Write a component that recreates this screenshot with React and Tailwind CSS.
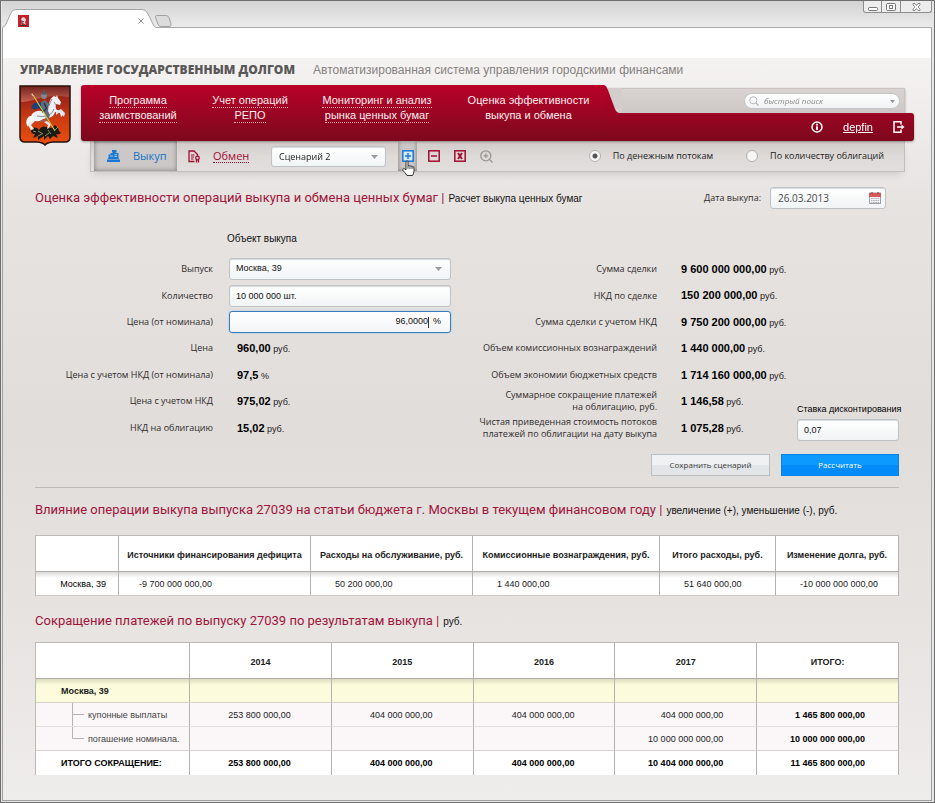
import React from "react";

const FIELD =
  "rounded-[3px] border border-[#bfc3c8] bg-linear-to-b from-white to-[#f1f4f5] shadow-[inset_0_1px_1px_#d5dadd]";

function Emblem({ className }) {
  return (
    <svg viewBox="0 0 52 62" className={className} aria-label="Герб Москвы">
      <defs>
        <linearGradient id="shield" x1="0" y1="0" x2="0" y2="1">
          <stop offset="0" stopColor="#8c1c12" />
          <stop offset="0.3" stopColor="#a82a18" />
          <stop offset="0.55" stopColor="#cc3c10" />
          <stop offset="1" stopColor="#ea5010" />
        </linearGradient>
        <linearGradient id="gloss" x1="0" y1="0" x2="0" y2="1">
          <stop offset="0" stopColor="#6d2a26" />
          <stop offset="1" stopColor="#d67a68" />
        </linearGradient>
      </defs>
      <path d="M1 1H51V52Q51 57 46 57H34Q28 57.500 26 60Q24 57.500 18 57H6Q1 57 1 52Z" fill="url(#shield)" stroke="#26100c" strokeWidth="1.500" />
      <path d="M2 2H50V12Q32 9 18 14Q8 17 2 17Z" fill="url(#gloss)" opacity="0.7" />
      {/* dragon */}
      <path d="M12 46q2-5 6-3l2 2q3-5 7-3l6 1l3-3q3 2 4 6l2 2q-2 2-5 1l2 4l-5-2l-3 3l-2-3l-4 4v-4l-6 4v-4l-5 2l2-4q-4 0-4-3z" fill="#191b14" />
      <path d="M19 46l5 3M29 45l3 4M36 45l3-3M19 51l4-2M26 51l4-3M14 46l3 1" stroke="#a39a74" strokeWidth="0.900" fill="none" />
      {/* horse */}
      <path d="M35 11l2 1l1-2l1 3l3 4l-1 3l-4-1q-1 4 1 6l5 1l1 4l-2 2l-1-4l-5-1q-1 5-7 6l-5 1q-3 3-8 2l-4 4l3 4l-3 1l-3-5l3-5q-1-4 2-7q4-3 9-2q5-2 7-7q1-6 5-8z" fill="#eef1f5" />
      <path d="M37 27l5-3l4 4l-1 4l-2-3l-2-2l-4 3zM28 36l4 3l-2 4l-2 1l1-4l-4-3z" fill="#dfe4ea" />
      <path d="M15 32q-5-3-7 2q-2 4 1 8q1-4 3-6q2-2 4-1z" fill="#f5f6f8" />
      <path d="M18 31q5 1 10 0M30 30q4-2 5-6M21 36q4 1 8-2M35 17l2 3M33 14q-2 3-3 7" stroke="#7a828e" strokeWidth="0.900" fill="none" />
      {/* rider */}
      <path d="M19 17q-5 0-7 6q2 0 3 2q3-2 8-2l4-4z" fill="#1f3f78" />
      <path d="M22 17l4-2l4 4l-1 7l2 4l-2 5h-2l-1-6l-4-4z" fill="#5f6b78" />
      <path d="M20 22l4 5l3-3M25 18l3 6" stroke="#1c2c48" strokeWidth="1.200" fill="none" />
      <circle cx="25" cy="11" r="3" fill="#7f8892" />
      <path d="M22.500 9.500l2.500-5l3 5z" fill="#505a66" />
      <path d="M14 10L36 46" stroke="#d8cb3a" strokeWidth="1.100" />
      <path d="M13 8l1.500 3l-2-1z" fill="#eee" />
    </svg>
  );
}

const Arrow = ({ className }) => (
  <svg viewBox="0 0 7 4" className={"pointer-events-none h-1 w-[7px] " + className} aria-hidden="true">
    <path d="M0 0H7L3.500 4Z" fill="#9a9ea3" />
  </svg>
);

function TitleBar() {
  return (
    <div className="flex h-[27px] items-end justify-between bg-linear-to-b from-[#d3d3d3] to-[#ededed] shadow-[inset_0_-1px_0_#a9a9a9]">
      <div className="flex items-end">
        <div className="relative flex h-[19px] w-[154px] items-center justify-between pt-1 pr-[11px] pl-4">
          <svg viewBox="0 0 154 19" className="absolute inset-0 h-[19px] w-[154px]" aria-hidden="true">
            <path d="M0 18.500Q3 18 4 15L9 4Q10 .5 14 .5H140Q144 .5 145.500 4L151 15Q152 18 154 18.500V19H0Z" fill="#fff" />
            <path d="M0 18.500Q3 18 4 15L9 4Q10 .5 14 .5H140Q144 .5 145.500 4L151 15Q152 18 154 18.500" fill="none" stroke="#a5a5a5" />
          </svg>
          <svg viewBox="0 0 11 12" className="relative h-3 w-[11px]" aria-hidden="true">
            <rect width="11" height="12" fill="#c51f2c" />
            <path d="M3 10l1-4l-1-2l2-2l2 1l1 2l-1 2l1 3l-3-2z" fill="#ddd" />
            <path d="M2 10.500h7M4 6l2 1M3 8h2" stroke="#333" />
          </svg>
          <button aria-label="Закрыть вкладку" className="relative flex size-2 items-center justify-center">
            <svg viewBox="0 0 6 6" className="size-[6px]"><path d="M.5 .5L5.500 5.500M5.500 .5L.5 5.500" stroke="#8f8f8f" /></svg>
          </button>
        </div>
        <button aria-label="Новая вкладка" className="mb-px -ml-px">
          <svg viewBox="0 0 18 13" className="h-3 w-[17px]"><path d="M1.500 .5H12Q14 .5 15 3L17 9Q18 12.500 15 12.500H6Q4 12.500 3 10L.5 3Q0 .5 1.500 .5Z" fill="#dcdcdc" stroke="#9a9a9a" /></svg>
        </button>
      </div>
      <div className="flex h-3 divide-x divide-[#8d8d8d] self-start rounded-b-[3px] border border-t-0 border-[#8d8d8d] bg-[#ededed]">
        <button aria-label="Свернуть" className="flex w-[18px] items-center justify-center pt-1">
          <svg viewBox="0 0 10 4" className="h-1 w-[10px]"><rect x=".5" y=".5" width="9" height="3" rx="1" fill="#fff" stroke="#777" /></svg>
        </button>
        <button aria-label="Развернуть" className="flex w-[19px] items-center justify-center">
          <svg viewBox="0 0 10 8" className="h-2 w-[10px]"><rect x=".5" y=".5" width="9" height="7" rx="1" fill="#fff" stroke="#777" /><rect x="3.500" y="2.500" width="3" height="3" fill="none" stroke="#777" /></svg>
        </button>
        <button aria-label="Закрыть" className="flex w-[30px] items-center justify-center">
          <svg viewBox="0 0 9 8" className="h-2 w-[9px]"><path d="M1 .5H3L4.500 2.500L6 .5H8V2L6 4L8 6V7.500H6L4.500 5.500L3 7.500H1V6L3 4L1 2Z" fill="#fff" stroke="#777" strokeWidth=".8" /></svg>
        </button>
      </div>
    </div>
  );
}

function NavLink({ lines, className, active }) {
  return (
    <a href="#" className={"flex flex-col items-center text-[11px] leading-[15px] text-[#fbeef0] " + className}>
      {lines.map((l) => (
        <span key={l} className={active ? "border-b border-transparent leading-[14px]" : "border-b border-dotted border-[#e5a5b0] leading-[14px]"}>
          {l}
        </span>
      ))}
    </a>
  );
}

function Header() {
  return (
    <header className="px-4">
      <div className="flex h-[27px] items-center gap-[18px] pb-[3px] pl-px">
        <h1 className="font-['Open_Sans',sans-serif] text-[12px] font-extrabold whitespace-nowrap text-[#5a5857]">УПРАВЛЕНИЕ ГОСУДАРСТВЕННЫМ ДОЛГОМ</h1>
        <p className="text-[12px] whitespace-nowrap text-[#858281]">Автоматизированная система управления городскими финансами</p>
      </div>
      <div className="flex gap-[10px]">
        <Emblem className="h-[62px] w-[52px] shrink-0" />
        <div className="mr-px min-w-0 flex-1">
          <div className="flex h-14 drop-shadow-[0_1px_1px_#00000055]">
            <nav className="flex w-[523px] shrink-0 rounded-l-[3px] bg-linear-to-b from-[#ba0029] to-[#7d081d] pt-2 whitespace-nowrap">
              <NavLink className="w-[114px]" lines={["Программа", "заимствований"]} />
              <NavLink className="w-[110px]" lines={["Учет операций", "РЕПО"]} />
              <NavLink className="w-[144px]" lines={["Мониторинг и анализ", "рынка ценных бумаг"]} />
              <NavLink active className="w-[155px] pl-1" lines={["Оценка эффективности", "выкупа и обмена"]} />
            </nav>
            <div className="flex min-w-0 flex-1 flex-col">
              <div className="flex h-7">
                <svg viewBox="0 0 18 28" className="h-7 w-[18px] shrink-0" aria-hidden="true">
                  <defs>
                    <linearGradient id="slant" x1="0" y1="0" x2="0" y2="1">
                      <stop offset="0" stopColor="#ba0029" />
                      <stop offset="1" stopColor="#9c0423" />
                    </linearGradient>
                  </defs>
                  <path d="M4 3H18V28H10Z" fill="#d3cdcb" />
                  <path d="M-1 0Q2 0 3.500 4L11 24Q12.500 28 16 28H-1Z" fill="url(#slant)" />
                </svg>
                <div className="mt-[3px] mr-[9px] flex flex-1 items-center justify-end border-t border-r border-[#c9c3c1] bg-linear-to-b from-[#d9d4d2] to-[#cdc6c4] pr-1">
                  <label className="flex h-4 w-[156px] items-center gap-[5px] rounded-full border border-[#c4c6c8] bg-linear-to-b from-white to-[#f1f3f4] pr-1 pl-1">
                    <svg viewBox="0 0 10 10" className="size-[10px] shrink-0" aria-hidden="true">
                      <circle cx="4.300" cy="4.300" r="3.600" fill="none" stroke="#b5b9bc" />
                      <path d="M7 7L9.600 9.600" stroke="#b5b9bc" strokeWidth="1.300" />
                    </svg>
                    <input type="search" aria-label="быстрый поиск" placeholder="быстрый поиск" className="min-w-0 flex-1 bg-transparent font-['Open_Sans',sans-serif] text-[8px] italic outline-none placeholder:text-[#8b8988]" />
                    <svg viewBox="0 0 5 3" className="h-[3px] w-[5px] shrink-0" aria-hidden="true"><path d="M0 0H5L2.500 3Z" fill="#8f9499" /></svg>
                  </label>
                </div>
              </div>
              <div className="flex h-7 items-center justify-end gap-5 rounded-r-[3px] bg-linear-to-b from-[#9c0423] to-[#7d081d] pr-[9px]">
                <button aria-label="Информация">
                  <svg viewBox="0 0 12 12" className="size-3"><circle cx="6" cy="6" r="5" fill="none" stroke="#fff" strokeWidth="1.500" /><path d="M6 5.300V9" stroke="#fff" strokeWidth="1.800" /><path d="M6 2.800V4.400" stroke="#fff" strokeWidth="1.800" /></svg>
                </button>
                <a href="#" className="text-[11px] text-white underline">depfin</a>
                <button aria-label="Выход">
                  <svg viewBox="0 0 12 12" className="size-3" fill="none" stroke="#fff" strokeWidth="1.500"><path d="M8 3.500V.8H1V11.200H8V8.500" /><path d="M4 6H10" /><path d="M8.500 3.500L11.500 6L8.500 8.500Z" fill="#fff" stroke="none" /></svg>
                </button>
              </div>
            </div>
          </div>
          <Toolbar />
        </div>
      </div>
    </header>
  );
}

function Toolbar() {
  return (
    <div className="mx-[9px] flex h-[31px] items-stretch border-x border-b border-[#c3bebd] bg-linear-to-b from-[#d0cbc9] via-[#dedad8] to-[#e2dedd] pl-[3px] font-['Open_Sans',sans-serif] shadow-[0_5px_8px_-3px_#00000022]">
      <button className="flex w-[83px] items-center gap-[13px] bg-[#cbc8c7] pl-[13px] text-[11px] text-[#1673c8] shadow-[inset_0_0_5px_#00000066]">
        <svg viewBox="0 0 13 12" className="h-3 w-[13px]" fill="#1878d6" aria-hidden="true">
          <path d="M5 0H9.500V2.500H8.500V3H11.500V8H1.500V4.500H3.500V3H6V2.500H5Z" />
          <path d="M0 9.500H13V12H0ZM1 8H12V9H1Z" />
          <path d="M3 6H6M7.500 4.700H10M7.500 6.500H10" stroke="#d7e6f4" strokeWidth=".8" />
        </svg>
        Выкуп
      </button>
      <button className="flex w-[84px] items-center gap-3 pl-[11px] text-[11px] text-[#a30b30]">
        <svg viewBox="0 0 13 13" className="size-[13px]" fill="none" stroke="#a30b30" strokeWidth="1.300" aria-hidden="true">
          <path d="M6.500 11.500H1V1H6L9.500 4.500V6" /><path d="M3 5H6.500M3 7H6M3 9H5.500" strokeWidth="1" />
          <circle cx="9.500" cy="8" r="1.800" /><path d="M8.500 10V12.500M10.500 10V12.500" />
        </svg>
        <span className="border-b border-dotted border-[#a30b30] leading-[13px]">Обмен</span>
      </button>
      <div className="relative ml-[10px] flex items-center pt-px">
        <select aria-label="Сценарий" className={"h-[21px] w-[115px] appearance-none pl-[7px] text-[9px] text-[#222] " + FIELD}>
          <option>Сценарий 2</option>
        </select>
        <Arrow className="absolute right-2" />
      </div>
      <div className="relative ml-3 flex">
        <button aria-label="Добавить" className="flex w-[19px] items-center justify-center bg-[#cbc7c6] shadow-[inset_0_0_4px_#00000066]">
          <svg viewBox="0 0 12 12" className="size-3" fill="none" stroke="#1878d6" strokeWidth="1.500"><rect x=".8" y=".8" width="10.400" height="10.400" fill="#dbe8f4" /><path d="M6 3V9M3 6H9" /></svg>
        </button>
        <svg viewBox="0 0 13 16" className="absolute top-[19px] left-[4px] z-10 h-4 w-[13px]" aria-hidden="true">
          <path d="M4 9V2Q4 .6 5 .6T6 2V6Q7 5 8 6.200Q9.200 5.400 10 6.800Q12 6 12 8V11Q12 13 10.500 15.500H5Q3 12.500 1 10.500Q.4 9 1.500 8.600Q2.800 8.500 4 10Z" fill="#fff" stroke="#222" strokeWidth=".9" />
          <path d="M6 6V9M8 6.500V9M10 7V9" stroke="#222" strokeWidth=".8" />
        </svg>
      </div>
      <div className="ml-[11px] flex items-center gap-[14px]">
        <button aria-label="Убрать">
          <svg viewBox="0 0 12 12" className="size-3" fill="none" stroke="#a30b30" strokeWidth="1.500"><rect x=".8" y=".8" width="10.400" height="10.400" /><path d="M3 6H9" /></svg>
        </button>
        <button aria-label="Удалить">
          <svg viewBox="0 0 12 12" className="size-3" fill="none" stroke="#a30b30" strokeWidth="1.500"><rect x=".8" y=".8" width="10.400" height="10.400" /><path d="M4 3L8 9M8 3L4 9" strokeWidth="1.900" /></svg>
        </button>
        <button aria-label="Увеличить">
          <svg viewBox="0 0 13 13" className="size-[13px]" fill="none" stroke="#999593" strokeWidth="1.300"><circle cx="5.800" cy="5.800" r="5" /><path d="M5.800 3.600V8M3.600 5.800H8M9.500 9.500L12.500 12.500" /></svg>
        </button>
      </div>
      <fieldset className="ml-auto flex items-center pr-[20px]">
        <Radio id="flows" label="По денежным потокам" defaultChecked />
        <span className="w-[33px]" />
        <Radio id="bonds" label="По количеству облигаций" />
      </fieldset>
    </div>
  );
}

const Radio = ({ id, label, defaultChecked }) => (
  <div className="flex items-center gap-3">
    <input
      id={id}
      type="radio"
      name="mode"
      defaultChecked={defaultChecked}
      className="size-3 appearance-none rounded-full border border-[#b3b1b0] bg-[#f6f6f6] checked:bg-[radial-gradient(circle,#555_0_2px,#f6f6f6_3px)]"
    />
    <label htmlFor={id} className="text-[9px] whitespace-nowrap text-[#222]">{label}</label>
  </div>
);

const SectionTitle = ({ title, note }) => (
  <h2 className="flex items-baseline gap-1 whitespace-nowrap">
    <span className="font-[Roboto,sans-serif] text-[13px] leading-5 text-[#a0143a]">{title} |</span>
    <small className="text-[10px] text-[#111]">{note}</small>
  </h2>
);

const LABEL = "text-right font-['Open_Sans',sans-serif] text-[9px] leading-3 text-[#2f2c2b]";

const Value = ({ value, unit }) => (
  <span className="text-[9px] whitespace-nowrap text-[#1c1a19]">
    <b className="text-[11px] text-black">{value}</b> {unit}
  </span>
);

const PRICES = [
  ["Цена", "960,00", "руб."],
  ["Цена с учетом НКД (от номинала)", "97,5", "%"],
  ["Цена с учетом НКД", "975,02", "руб."],
  ["НКД на облигацию", "15,02", "руб."],
];

const TOTALS = [
  [["Сумма сделки"], "9 600 000 000,00"],
  [["НКД по сделке"], "150 200 000,00"],
  [["Сумма сделки с учетом НКД"], "9 750 200 000,00"],
  [["Объем комиссионных вознаграждений"], "1 440 000,00"],
  [["Объем экономии бюджетных средств"], "1 714 160 000,00"],
  [["Суммарное сокращение платежей", "на облигацию, руб."], "1 146,58"],
  [["Чистая приведенная стоимость потоков", "платежей по облигации на дату выкупа"], "1 075,28"],
];

function Row({ label, htmlFor, children }) {
  return (
    <div className="flex items-center gap-4">
      <label htmlFor={htmlFor} className={"w-[178px] shrink-0 " + LABEL}>{label}</label>
      {children}
    </div>
  );
}

function Form() {
  return (
    <section>
      <h3 className="pl-48 text-[10px] leading-4 text-[#111]">Объект выкупа</h3>
      <div className="mt-[9px] flex h-[185px]">
        <div className="grid w-[416px] shrink-0 grid-rows-7">
          <Row label="Выпуск" htmlFor="issue">
            <div className="relative flex flex-1 items-center">
              <select id="issue" className={"h-[22px] w-full appearance-none pl-[6px] text-[9px] text-[#111] " + FIELD}>
                <option>Москва, 39</option>
              </select>
              <Arrow className="absolute right-[9px]" />
            </div>
          </Row>
          <Row label="Количество" htmlFor="amount">
            <input id="amount" defaultValue="10 000 000 шт." className={"h-[22px] min-w-0 flex-1 pl-[6px] text-[9px] text-[#111] " + FIELD} />
          </Row>
          <Row label="Цена (от номинала)" htmlFor="price">
            <div className="flex h-[22px] min-w-0 flex-1 items-center rounded-[3px] border border-[#3a7db8] bg-linear-to-b from-white to-[#f3f5f6] pr-[9px] text-[9px] text-[#111] shadow-[0_0_2px_#8fc0e8]">
              <input id="price" defaultValue="96,0000" className="min-w-0 flex-1 bg-transparent text-right outline-none" />
              <span className="mr-1 h-[11px] w-px bg-[#333]" />
              <span>%</span>
            </div>
          </Row>
          {PRICES.map(([label, value, unit]) => (
            <Row key={label} label={label}>
              <span className="flex pl-2"><Value value={value} unit={unit} /></span>
            </Row>
          ))}
        </div>
        <div className="grid flex-1 grid-rows-7">
          {TOTALS.map(([lines, value]) => (
            <div key={value} className="flex items-center gap-6">
              <span className={"w-[206px] shrink-0 whitespace-nowrap " + LABEL}>
                {lines.map((l) => <span key={l} className="block">{l}</span>)}
              </span>
              <Value value={value} unit="руб." />
            </div>
          ))}
        </div>
        <div className="flex w-[102px] shrink-0 flex-col justify-end gap-1">
          <label htmlFor="rate" className="text-[9px] leading-3 whitespace-nowrap text-black">Ставка дисконтирования</label>
          <input id="rate" defaultValue="0,07" className={"h-[22px] w-full pl-[6px] text-[9px] text-[#111] " + FIELD} />
        </div>
      </div>
      <div className="mt-[13px] flex justify-end gap-[11px] font-['Open_Sans',sans-serif] text-[8px]">
        <button className="h-[22px] w-[119px] border border-[#b9bec2] bg-linear-to-b from-[#eff1f2] from-50% to-[#e3e6e8] to-50% text-[#3a3d40]">Сохранить сценарий</button>
        <button className="h-[22px] w-[118px] border border-[#0a83e6] bg-linear-to-b from-[#0c9aff] from-50% to-[#038bfa] to-50% text-white">Рассчитать</button>
      </div>
    </section>
  );
}

const TABLE = "w-full table-fixed border-separate border-spacing-0 border-t border-l border-[#bdb9b8] bg-white text-[9px] leading-3 text-[#1c1c1c]";
const CELL = "border-r border-[#b5b1b0] ";
const HEAD = CELL + "h-9 border-b border-b-[#b1adac] pt-[3px] text-center font-bold whitespace-nowrap";

const BUDGET = [
  ["-9 700 000 000,00", "pl-5"],
  ["50 200 000,00", "pl-6"],
  ["1 440 000,00", "pl-6"],
  ["51 640 000,00", "pl-6"],
  ["-10 000 000 000,00", "pl-6"],
];

function BudgetTable() {
  return (
    <table className={TABLE}>
      <colgroup>
        <col className="w-[83px]" /><col className="w-[192px]" /><col className="w-[162px]" /><col className="w-[187px]" /><col className="w-[116px]" /><col />
      </colgroup>
      <thead>
        <tr>
          {["", "Источники финансирования дефицита", "Расходы на обслуживание, руб.", "Комиссионные вознаграждения, руб.", "Итого расходы, руб.", "Изменение долга, руб."].map((h) => (
            <th key={h} scope="col" className={HEAD}>{h}</th>
          ))}
        </tr>
      </thead>
      <tbody>
        <tr className="bg-linear-to-b from-[#dcdad9] to-white to-25%">
          <th scope="row" className={CELL + "h-6 border-b border-b-[#cfcbca] pr-3 text-right font-normal text-black"}>Москва, 39</th>
          {BUDGET.map(([v, pad]) => (
            <td key={v} className={CELL + "border-b border-b-[#cfcbca] text-left whitespace-nowrap " + pad}>{v}</td>
          ))}
        </tr>
      </tbody>
    </table>
  );
}

const NUM = CELL + "pr-10 text-right whitespace-nowrap";
const NUM_WIDE = CELL + "pr-[33px] text-right whitespace-nowrap";

function Cells({ values, className, boldLast }) {
  return values.map((v, i) => (
    <td key={i} className={(i > 2 ? NUM_WIDE : NUM) + " " + className + (boldLast && i === 4 ? " font-bold text-black" : "")}>{v}</td>
  ));
}

function ReductionTable() {
  const line = "border-b border-b-[#e4dfdf]";
  return (
    <table className={TABLE}>
      <colgroup>
        <col className="w-[154px]" /><col /><col /><col /><col /><col />
      </colgroup>
      <thead>
        <tr>
          {["", "2014", "2015", "2016", "2017", "ИТОГО:"].map((h) => (
            <th key={h} scope="col" className={HEAD}>{h}</th>
          ))}
        </tr>
      </thead>
      <tbody>
        <tr className="h-6 bg-linear-to-b from-[#dcdcbf] to-[#fcfbdb] to-25%">
          <th scope="row" className={CELL + "border-b border-b-[#d5d2c8] pl-[25px] text-left font-bold"}>Москва, 39</th>
          <Cells values={["", "", "", "", ""]} className="border-b border-b-[#d5d2c8]" />
        </tr>
        <tr className="h-6 bg-[#fbf7f9]">
          <th scope="row" className={CELL + line + " text-left font-normal text-[#444]"}>
            <span className="flex h-[23px] items-stretch gap-1 pl-9">
              <svg viewBox="0 0 12 23" className="h-[23px] w-3" aria-hidden="true"><path d="M.5 0V23M.5 11.500H12" stroke="#b7b3b3" fill="none" /></svg>
              <span className="self-center">купонные выплаты</span>
            </span>
          </th>
          <Cells values={["253 800 000,00", "404 000 000,00", "404 000 000,00", "404 000 000,00", "1 465 800 000,00"]} className={line} boldLast />
        </tr>
        <tr className="h-6 bg-[#fbf7f9]">
          <th scope="row" className={CELL + "border-b border-b-[#d8d3d3] text-left font-normal text-[#444]"}>
            <span className="flex h-[23px] items-stretch gap-1 pl-9 whitespace-nowrap">
              <svg viewBox="0 0 12 23" className="h-[23px] w-3" aria-hidden="true"><path d="M.5 0V11.500H12" stroke="#b7b3b3" fill="none" /></svg>
              <span className="self-center">погашение номинала.</span>
            </span>
          </th>
          <Cells values={["", "", "", "10 000 000 000,00", "10 000 000 000,00"]} className="border-b border-b-[#d8d3d3]" boldLast />
        </tr>
        <tr className="h-6 font-bold text-black">
          <th scope="row" className={CELL + "pl-[25px] text-left whitespace-nowrap"}>ИТОГО СОКРАЩЕНИЕ:</th>
          <Cells values={["253 800 000,00", "404 000 000,00", "404 000 000,00", "10 404 000 000,00", "11 465 800 000,00"]} className="" />
        </tr>
      </tbody>
    </table>
  );
}

export default function App() {
  return (
    <div className="flex min-h-screen flex-col border border-[#6e6e6e] bg-[#e6e6e6] pr-0.5 pb-px pl-px font-['Liberation_Sans',Arial,sans-serif]">
      <TitleBar />
      <div className="flex flex-1 flex-col border border-t-0 border-[#a0a0a0]">
        <div className="h-[30px] bg-white" />
        <div className="flex-1 bg-[linear-gradient(#f5f3f2,#e6e3e1_20%,#e1dddb_50%,#e6e3e1_75%,#efedeb)]">
          <Header />
          <main className="px-8 pt-[15px]">
            <div className="flex items-center justify-between pr-[13px]">
              <SectionTitle title="Оценка эффективности операций выкупа и обмена ценных бумаг" note="Расчет выкупа ценных бумаг" />
              <div className="flex items-center gap-[9px]">
                <label htmlFor="date" className={LABEL}>Дата выкупа:</label>
                <div className={"flex h-[22px] w-[116px] items-center pr-1 pl-[7px] " + FIELD}>
                  <input id="date" defaultValue="26.03.2013" className="min-w-0 flex-1 bg-transparent font-['Open_Sans',sans-serif] text-[10px] text-[#45484b] outline-none" />
                  <svg viewBox="0 0 12 12" className="size-3" aria-hidden="true">
                    <rect x=".5" y="1" width="11" height="10.500" fill="#f4f4f4" stroke="#9aa0a5" />
                    <rect y="1" width="12" height="4" fill="#d8585c" />
                    <path d="M3 0V2M9 0V2" stroke="#8a2a2e" />
                    <path d="M2 6.500H10M2 8.500H10M2 10.500H10" stroke="#a9aeb3" strokeDasharray="1.500 .7" />
                  </svg>
                </div>
              </div>
            </div>
            <div className="pt-[22px]"><Form /></div>
            <hr className="mt-[11px] border-t border-[#bdb9b7]" />
            <div className="pt-3 pb-[15px]">
              <SectionTitle title="Влияние операции выкупа выпуска 27039 на статьи бюджета г. Москвы в текущем финансовом году" note="увеличение (+), уменьшение (-), руб." />
            </div>
            <BudgetTable />
            <div className="pt-[15px] pb-[11px]">
              <SectionTitle title="Сокращение платежей по выпуску 27039 по результатам выкупа" note="руб." />
            </div>
            <ReductionTable />
          </main>
        </div>
      </div>
    </div>
  );
}
